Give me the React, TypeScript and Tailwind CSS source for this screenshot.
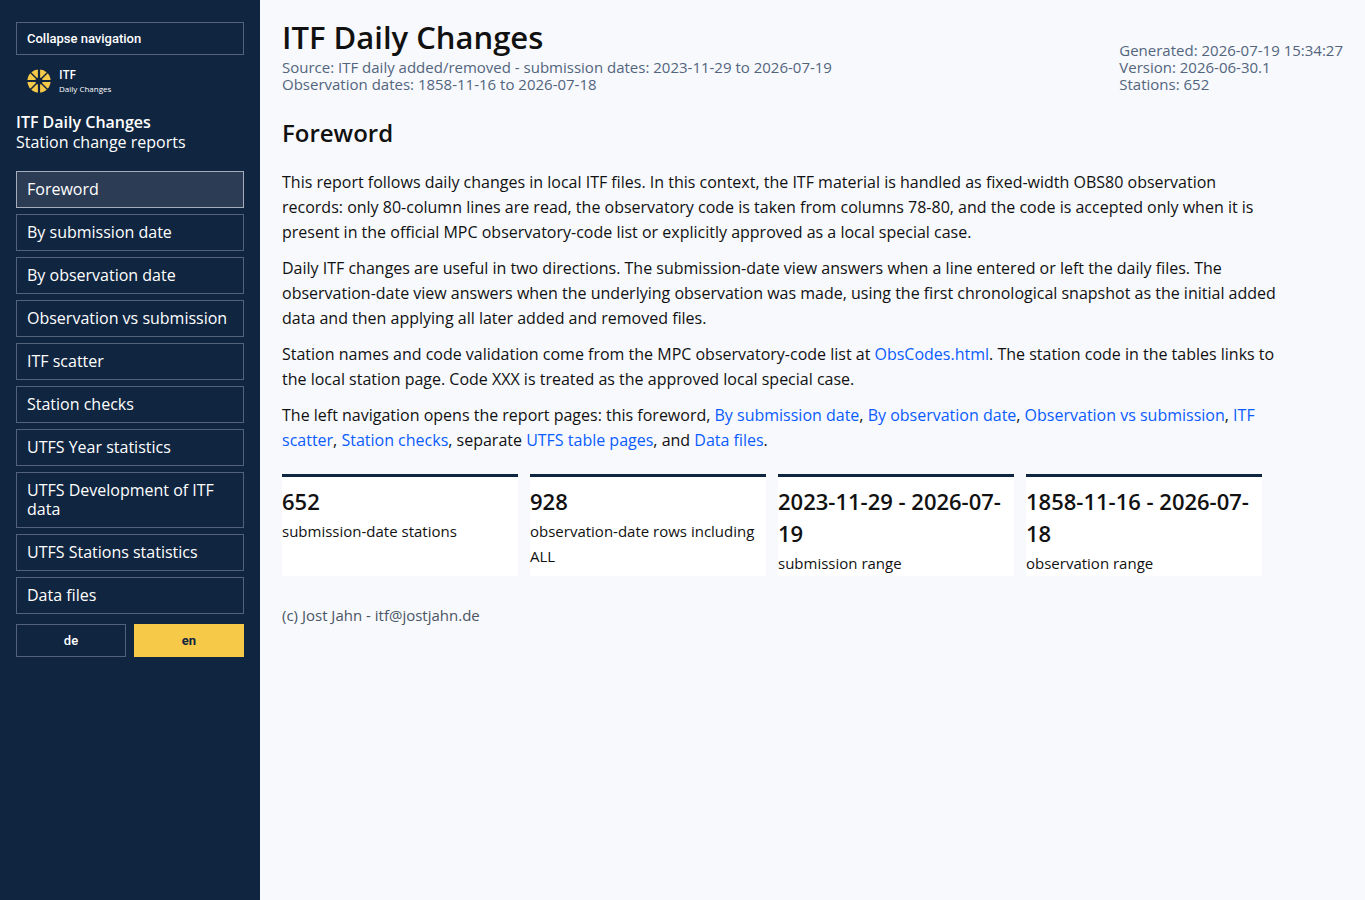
import { useState } from 'react';

const NAV_ITEMS = [
  'Foreword',
  'By submission date',
  'By observation date',
  'Observation vs submission',
  'ITF scatter',
  'Station checks',
  'UTFS Year statistics',
  'UTFS Development of ITF data',
  'UTFS Stations statistics',
  'Data files',
];

const LANGUAGES = ['de', 'en'];

const STATS = [
  { value: '652', label: 'submission-date stations' },
  { value: '928', label: 'observation-date rows including ALL' },
  { value: '2023-11-29 - 2026-07-19', label: 'submission range' },
  { value: '1858-11-16 - 2026-07-18', label: 'observation range' },
];

function Logo() {
  return (
    <div className="flex items-center gap-2 pl-[11px]">
      {/* Yellow disc cut into eight wedges */}
      <svg viewBox="-12 -12 24 24" className="w-6 h-6" aria-hidden="true">
        <circle r="11.6" fill="#f7c948" />
        <g stroke="#102540">
          <path d="M0 -12 V12 M-12 0 H12" strokeWidth="2.2" />
          <path d="M-9 -9 L9 9 M-9 9 L9 -9" strokeWidth="1.5" />
        </g>
        <circle r="3.6" fill="#102540" />
      </svg>
      <div>
        <div className="text-[12px] leading-4 font-semibold">ITF</div>
        <div className="text-[8px] leading-3">Daily Changes</div>
      </div>
    </div>
  );
}

function TextLink({ children }: { children: string }) {
  return <a href="#" className="text-[#0b5cff] hover:underline">{children}</a>;
}

export default function App() {
  const [page, setPage] = useState('Foreword');
  const [language, setLanguage] = useState('en');
  const [collapsed, setCollapsed] = useState(false);

  return (
    <div className="flex min-h-screen bg-[#f7f9fd] text-[#111] font-['Trebuchet_MS','Open_Sans',sans-serif]">
      {/* Sidebar */}
      <aside className="w-[260px] shrink-0 bg-[#102540] text-white px-4 py-[22px]">
        <button
          onClick={() => setCollapsed(!collapsed)}
          className="w-full h-[33px] px-[10px] border border-[#52627a] text-left text-[13px] font-medium font-['Roboto',sans-serif]"
        >
          Collapse navigation
        </button>
        {!collapsed && (
          <>
            <div className="mt-3 mb-[17px]">
              <Logo />
            </div>
            <div className="leading-5">
              <div className="font-semibold">ITF Daily Changes</div>
              <div>Station change reports</div>
            </div>
            <nav className="mt-[19px] flex flex-col gap-[6px]">
              {NAV_ITEMS.map(item => (
                <a
                  key={item}
                  href="#"
                  onClick={() => setPage(item)}
                  className={`block border px-[10px] py-2 leading-[19px] ${
                    item === page ? 'bg-[#2d3c55] border-[#a5adba]' : 'border-[#52627a] hover:bg-[#2d3c55]'
                  }`}
                >
                  {item}
                </a>
              ))}
            </nav>
            <div className="mt-[10px] grid grid-cols-2 gap-2">
              {LANGUAGES.map(code => (
                <button
                  key={code}
                  onClick={() => setLanguage(code)}
                  className={`h-[33px] border text-[13px] font-['Roboto',sans-serif] ${
                    code === language
                      ? 'bg-[#f7c948] border-[#f7c948] text-[#102540] font-bold'
                      : 'border-[#52627a] font-medium'
                  }`}
                >
                  {code}
                </button>
              ))}
            </div>
          </>
        )}
      </aside>

      {/* Report */}
      <main className="flex-1 min-w-0 px-[22px] py-[18px]">
        <header className="flex items-end justify-between gap-6">
          <div>
            <h1 className="text-[31px] leading-[38px] font-semibold">ITF Daily Changes</h1>
            <p className="mt-[3px] text-[15px] leading-[17px] text-[#53657d]">
              Source: ITF daily added/removed - submission dates: 2023-11-29 to 2026-07-19
              <br />
              Observation dates: 1858-11-16 to 2026-07-18
            </p>
          </div>
          <p className="text-[15px] leading-[17px] text-[#53657d] whitespace-nowrap">
            Generated: 2026-07-19 15:34:27
            <br />
            Version: 2026-06-30.1
            <br />
            Stations: 652
          </p>
        </header>

        <section className="leading-[25px]">
          <h2 className="mt-6 mb-[21px] text-[24px] leading-8 font-semibold">Foreword</h2>
          <div className="max-w-[996px] flex flex-col gap-[11px]">
            <p>
              This report follows daily changes in local ITF files. In this context, the ITF material is handled as
              fixed-width OBS80 observation records: only 80-column lines are read, the observatory code is taken from
              columns 78-80, and the code is accepted only when it is present in the official MPC observatory-code list
              or explicitly approved as a local special case.
            </p>
            <p>
              Daily ITF changes are useful in two directions. The submission-date view answers when a line entered or
              left the daily files. The observation-date view answers when the underlying observation was made, using
              the first chronological snapshot as the initial added data and then applying all later added and removed
              files.
            </p>
            <p>
              Station names and code validation come from the MPC observatory-code list at{' '}
              <TextLink>ObsCodes.html</TextLink>. The station code in the tables links to the local station page. Code
              XXX is treated as the approved local special case.
            </p>
            <p>
              The left navigation opens the report pages: this foreword, <TextLink>By submission date</TextLink>,{' '}
              <TextLink>By observation date</TextLink>, <TextLink>Observation vs submission</TextLink>,{' '}
              <TextLink>ITF scatter</TextLink>, <TextLink>Station checks</TextLink>, separate{' '}
              <TextLink>UTFS table pages</TextLink>, and <TextLink>Data files</TextLink>.
            </p>
          </div>

          {/* Key figures */}
          <div className="mt-[21px] max-w-[980px] grid grid-cols-4 gap-3">
            {STATS.map(stat => (
              <div key={stat.label} className="bg-white border-t-3 border-[#102540] pt-2">
                <strong className="block text-[22px] leading-8 font-semibold">{stat.value}</strong>
                <span className="block mt-[2px] text-[15px]">{stat.label}</span>
              </div>
            ))}
          </div>
        </section>

        <footer className="mt-7 text-[15px] leading-[22px] text-[#4b5563]">(c) Jost Jahn - itf@jostjahn.de</footer>
      </main>
    </div>
  );
}
